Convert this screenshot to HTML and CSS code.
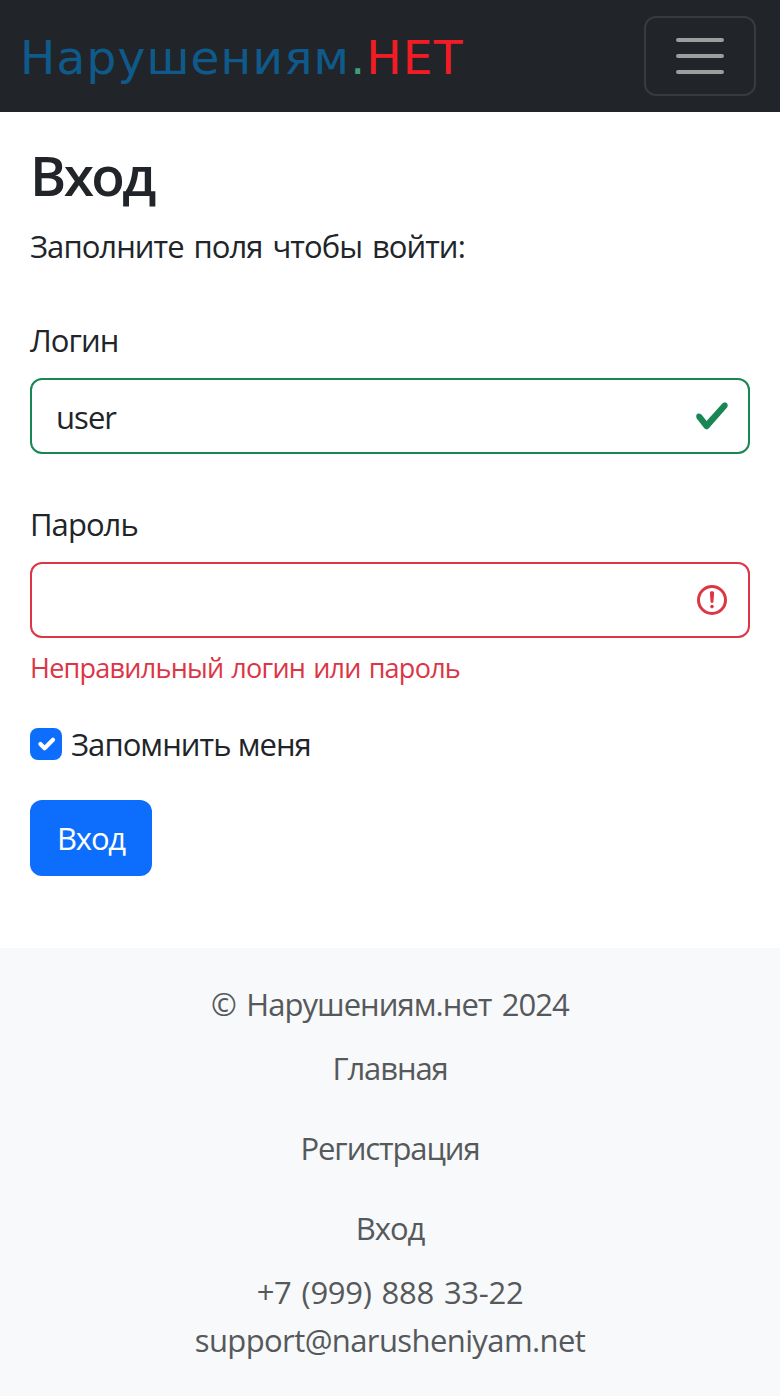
FILE: index.html
```html
<!DOCTYPE html>
<html lang="ru">
<head>
<meta charset="utf-8">
<title>Вход</title>
<link rel="stylesheet" href="styles.css">
</head>
<body>
<header class="navbar">
  <a class="brand"><span class="brand-main">Нарушениям</span><span class="brand-dot">.</span><span class="brand-net">НЕТ</span></a>
  <button class="toggler" type="button" aria-label="Меню">
    <svg width="60" height="60" viewBox="0 0 30 30"><path stroke="#9b9d9e" stroke-linecap="round" stroke-miterlimit="10" stroke-width="2" d="M4 7h22M4 15h22M4 23h22"/></svg>
  </button>
</header>
<main class="content">
  <h1 class="title">Вход</h1>
  <p class="intro">Заполните поля чтобы войти:</p>
  <form class="form">
    <div class="field">
      <label class="label">Логин</label>
      <div class="control valid">
        <span class="value">user</span>
        <svg width="36" height="36" viewBox="0 0 8 8"><path fill="#198754" d="M2.3 6.73.6 4.53c-.4-1.04.46-1.4 1.1-.8l1.1 1.4 3.4-3.8c.6-.63 1.6-.27 1.2.7l-4 4.6c-.43.5-.8.4-1.1.1z"/></svg>
      </div>
    </div>
    <div class="field password">
      <label class="label">Пароль</label>
      <div class="control invalid">
        <span class="value"></span>
        <svg width="36" height="36" viewBox="0 0 12 12" fill="none" stroke="#dc3545"><circle cx="6" cy="6" r="4.5"/><path stroke-linejoin="round" d="M5.8 3.6h.4L6 6.5z"/><circle cx="6" cy="8.2" r=".6" fill="#dc3545" stroke="none"/></svg>
      </div>
      <div class="feedback">Неправильный логин или пароль</div>
    </div>
    <label class="remember">
      <span class="checkbox"><svg width="28" height="28" viewBox="0 0 20 20"><path fill="none" stroke="#fff" stroke-linecap="round" stroke-linejoin="round" stroke-width="3" d="m6 10 3 3 6-6"/></svg></span>
      <span>Запомнить меня</span>
    </label>
    <button class="submit" type="button">Вход</button>
  </form>
</main>
<footer class="footer">
  <div class="copyright">© Нарушениям.нет 2024</div>
  <nav class="links">
    <a class="link">Главная</a>
    <a class="link">Регистрация</a>
    <a class="link">Вход</a>
  </nav>
  <div class="phone">+7 (999) 888 33-22</div>
  <div class="mail">support@narusheniyam.net</div>
</footer>
</body>
</html>
```
FILE: styles.css
```css
* { box-sizing: border-box; }
body {
  margin: 0;
  font-family: "Open Sans", "Noto Sans", sans-serif;
  font-size: 31px;
  line-height: 48px;
  letter-spacing: -0.95px;
  color: #212529;
  background: #fff;
  white-space: nowrap;
}
.navbar {
  display: flex;
  justify-content: space-between;
  align-items: center;
  height: 112px;
  padding: 0 24px 0 20px;
  background: #212529;
}
.brand {
  padding-top: 4px;
  font-family: "DejaVu Sans", sans-serif;
  font-size: 47px;
  letter-spacing: 1.15px;
}
.brand-main { color: #0f5a8a; }
.brand-dot { color: #3f9e76; }
.brand-net { color: #f41c24; }
.toggler {
  display: flex;
  align-items: center;
  justify-content: center;
  width: 112px;
  height: 80px;
  padding: 0;
  border: 2px solid #373a3e;
  border-radius: 12px;
  background: none;
}
.toggler svg, .control svg, .checkbox svg { display: block; }
.content { padding: 29px 30px 0; height: 836px; }
.title {
  margin: 0 0 14px;
  font-size: 55px;
  line-height: 67px;
  font-weight: 600;
  letter-spacing: -2.6px;
}
.intro { margin: 0 0 46px; word-spacing: 2.8px; }
.field { margin-bottom: 46px; }
.label { display: block; margin-bottom: 14px; }
.control {
  display: flex;
  align-items: center;
  justify-content: space-between;
  height: 76px;
  padding: 0 18px 0 24px;
  border: 2px solid;
  border-radius: 12px;
}
.valid { border-color: #198754; }
.invalid { border-color: #dc3545; }
.value { color: #212529; padding-top: 1px; }
.password { margin-bottom: 31px; }
.feedback {
  margin-top: 9px;
  font-size: 27px;
  line-height: 42px;
  letter-spacing: -0.75px;
  word-spacing: 1.7px;
  color: #dc3545;
}
.remember { display: flex; align-items: center; gap: 9px; }
.checkbox {
  display: flex;
  align-items: center;
  justify-content: center;
  width: 32px;
  height: 32px;
  background: #0d6efd;
  border-radius: 8px;
}
.submit {
  display: block;
  width: 122px;
  height: 76px;
  margin-top: 32px;
  padding: 0;
  border: 0;
  border-radius: 12px;
  background: #0d6efd;
  color: #fff;
  font: inherit;
  letter-spacing: -1.2px;
}
.footer {
  height: 448px;
  padding-top: 32px;
  background: #f8f9fa;
  color: #56595c;
  text-align: center;
}
.copyright { word-spacing: 3.2px; }
.link { display: block; padding: 16px 0; letter-spacing: -1.1px; }
.phone { letter-spacing: -0.3px; word-spacing: 2.3px; }
.mail { letter-spacing: -0.6px; }
```
